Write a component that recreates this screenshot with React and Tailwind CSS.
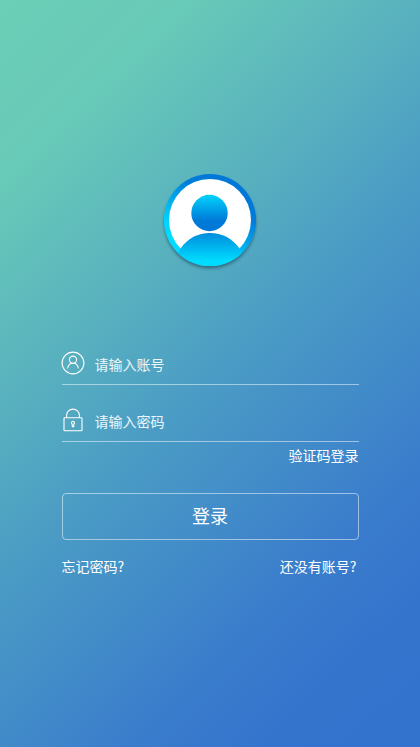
import React from "react";

const AvatarLogo = () => (
  <svg width="104" height="108" viewBox="0 0 104 108" className="block">
    <defs>
      <linearGradient id="ring" x1="0.75" y1="0.2" x2="0.35" y2="0.85">
        <stop offset="0" stopColor="#0078d8" />
        <stop offset="0.2" stopColor="#007cda" />
        <stop offset="0.85" stopColor="#00d4ff" />
        <stop offset="1" stopColor="#00dcff" />
      </linearGradient>
      <linearGradient id="head" x1="0" y1="0" x2="0" y2="1">
        <stop offset="0" stopColor="#00d4fc" />
        <stop offset="0.7" stopColor="#007ad8" />
        <stop offset="1" stopColor="#0078d7" />
      </linearGradient>
      <linearGradient id="body" x1="0" y1="0" x2="0" y2="1">
        <stop offset="0" stopColor="#008cdc" />
        <stop offset="0.85" stopColor="#00dcff" />
        <stop offset="1" stopColor="#00dcff" />
      </linearGradient>
      <filter id="shadow" x="-20%" y="-20%" width="140%" height="140%">
        <feDropShadow dx="0" dy="2.5" stdDeviation="1.8" floodColor="#1d4458" floodOpacity="0.6" />
      </filter>
      <clipPath id="disc">
        <circle cx="52" cy="52" r="46" />
      </clipPath>
    </defs>
    <circle cx="52" cy="52" r="46" fill="url(#ring)" filter="url(#shadow)" />
    <circle cx="52" cy="52" r="41" fill="#fff" />
    <circle cx="51.5" cy="45" r="18.2" fill="url(#head)" />
    <path
      clipPath="url(#disc)"
      d="M22.500 80.500C30 70 40 65 52 65s22 5 29.500 15.500L89 98H15z"
      fill="url(#body)"
    />
  </svg>
);

const UserIcon = () => (
  <svg width="24" height="24" viewBox="0 0 24 24" fill="none" stroke="#fff" strokeWidth="1.1">
    <circle cx="12" cy="12" r="10.900" />
    <circle cx="12" cy="8.700" r="3.600" />
    <path d="M6.700 17c.5-2.900 2.500-4.700 5.300-4.700s4.800 1.800 5.300 4.700" strokeLinecap="round" />
  </svg>
);

const LockIcon = () => (
  <svg width="24" height="24" viewBox="0 0 24 24" fill="none" stroke="#fff" strokeWidth="1.1">
    <rect x="3" y="9.800" width="18" height="13" rx="0.800" />
    <path d="M5.600 9.800V7.500a6.400 6.400 0 0 1 12.800 0v2.300" />
    <path d="M12 13.300a1.500 1.500 0 0 1 .9 2.700l-.3 2.600h-1.200l-.3-2.600a1.500 1.500 0 0 1 .9-2.700z" />
  </svg>
);

const fields = [
  { type: "text", placeholder: "请输入账号", icon: <UserIcon /> },
  { type: "password", placeholder: "请输入密码", icon: <LockIcon /> },
];

export default function App() {
  return (
    <main className="flex h-[747px] w-[420px] flex-col items-center overflow-hidden bg-[linear-gradient(136deg,#6bceb6_0%,#68cab8_16%,#57afbf_37%,#4a9bc5_51%,#418ac9_65%,#3a7ccc_76%,#3574cd_87%,#3473cd_100%)] pt-[168px] font-['Noto_Sans_CJK_SC',sans-serif] text-sm text-white">
      <AvatarLogo />

      <form className="mt-[52px] flex w-[297px] flex-col">
        {fields.map((f) => (
          <label key={f.type} className="flex h-[57px] items-start border-b border-white/50 pt-[23px]">
            <span className="-ml-px shrink-0">{f.icon}</span>
            <input
              type={f.type}
              placeholder={f.placeholder}
              className="ml-[10px] mt-[3px] h-5 w-full bg-transparent leading-5 outline-none placeholder:text-white/90"
            />
          </label>
        ))}

        <a className="mt-[3px] self-end leading-5">验证码登录</a>

        <button
          type="button"
          className="mt-[28px] h-[47px] rounded border border-white/50 pb-[3px] text-lg leading-6"
        >
          登录
        </button>

        <div className="mt-[16px] flex justify-between pr-[2px] leading-5">
          <a>忘记密码?</a>
          <a>还没有账号?</a>
        </div>
      </form>
    </main>
  );
}
